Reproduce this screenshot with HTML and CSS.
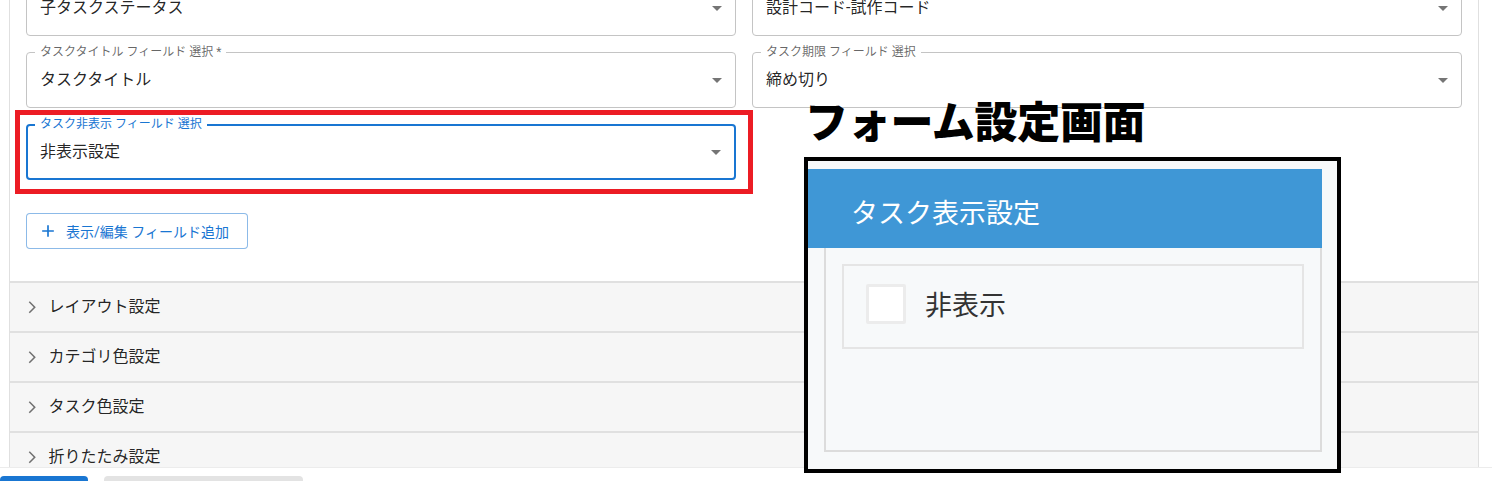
FILE: index.html
```html
<!DOCTYPE html>
<html lang="ja">
<head>
<meta charset="utf-8">
<title>設定</title>
<link rel="stylesheet" href="styles.css">
</head>
<body>
<div class="app">
  <main class="main">
    <div class="page">
      <section class="panel">
        <div class="panel-body">
          <div class="fields">
            <div class="field">
              <span class="value">子タスクステータス</span>
              <svg class="arrow" viewBox="0 0 24 24"><path d="M7 10l5 5 5-5z"/></svg>
            </div>
            <div class="field">
              <span class="value">設計コード-試作コード</span>
              <svg class="arrow" viewBox="0 0 24 24"><path d="M7 10l5 5 5-5z"/></svg>
            </div>
            <div class="field">
              <span class="label">タスクタイトル フィールド 選択 *</span>
              <span class="value">タスクタイトル</span>
              <svg class="arrow" viewBox="0 0 24 24"><path d="M7 10l5 5 5-5z"/></svg>
            </div>
            <div class="field">
              <span class="label">タスク期限 フィールド 選択</span>
              <span class="value">締め切り</span>
              <svg class="arrow" viewBox="0 0 24 24"><path d="M7 10l5 5 5-5z"/></svg>
            </div>
            <div class="annot-wrap">
              <div class="field field-focused">
                <span class="label">タスク非表示 フィールド 選択</span>
                <span class="value">非表示設定</span>
                <svg class="arrow" viewBox="0 0 24 24"><path d="M7 10l5 5 5-5z"/></svg>
              </div>
              <div class="red-box"></div>
            </div>
          </div>
          <button class="add-btn" type="button">
            <svg class="plus" viewBox="0 0 24 24"><path d="M19 13h-6v6h-2v-6H5v-2h6V5h2v6h6v2z"/></svg>
            <span>表示/編集 フィールド追加</span>
          </button>
        </div>
        <div class="acc-row">
          <svg class="chev" viewBox="0 0 24 24"><path d="M6.23 20.23 8 22l10-10L8 2 6.23 3.77 14.46 12z"/></svg>
          <span class="acc-title">レイアウト設定</span>
        </div>
        <div class="acc-row">
          <svg class="chev" viewBox="0 0 24 24"><path d="M6.23 20.23 8 22l10-10L8 2 6.23 3.77 14.46 12z"/></svg>
          <span class="acc-title">カテゴリ色設定</span>
        </div>
        <div class="acc-row">
          <svg class="chev" viewBox="0 0 24 24"><path d="M6.23 20.23 8 22l10-10L8 2 6.23 3.77 14.46 12z"/></svg>
          <span class="acc-title">タスク色設定</span>
        </div>
        <div class="acc-row">
          <svg class="chev" viewBox="0 0 24 24"><path d="M6.23 20.23 8 22l10-10L8 2 6.23 3.77 14.46 12z"/></svg>
          <span class="acc-title">折りたたみ設定</span>
        </div>
      </section>
    </div>
  </main>
  <footer class="footer">
    <button class="btn-primary" type="button" aria-label="primary"></button>
    <button class="btn-secondary" type="button" aria-label="secondary"></button>
  </footer>

  <div class="annotation">
    <h2 class="annot-title">フォーム設定画面</h2>
    <div class="shot">
      <div class="shot-header">タスク表示設定</div>
      <div class="shot-panel">
        <div class="shot-group">
          <span class="shot-check"></span>
          <span class="shot-label">非表示</span>
        </div>
      </div>
    </div>
  </div>
</div>
</body>
</html>
```

FILE: styles.css
```css
* { box-sizing: border-box; }

html, body {
  margin: 0;
  padding: 0;
  background: #ffffff;
}

body {
  font-family: "Roboto", "Noto Sans CJK JP", sans-serif;
  color: rgba(0, 0, 0, 0.87);
}

.app {
  position: relative;
  height: 100vh;
  display: flex;
  flex-direction: column;
  overflow: hidden;
}

.main {
  flex: 1;
  overflow: hidden;
}

.page {
  margin-top: -20px;
}

.panel {
  margin-left: 9px;
  width: 1470px;
  border-left: 1px solid #e0e0e0;
  border-right: 1px solid #e0e0e0;
}

.panel-body {
  padding: 0 16px 32px;
  background: #ffffff;
}

.fields {
  display: grid;
  grid-template-columns: 710px 710px;
  grid-auto-rows: 56px;
  gap: 16px;
}

.field {
  position: relative;
  height: 56px;
  border: 1px solid #c4c4c4;
  border-radius: 4px;
  display: flex;
  align-items: center;
  padding: 0 13px;
  background: #ffffff;
}

.field-focused {
  border: 2px solid #1976d2;
  padding: 0 12px;
}

.label {
  position: absolute;
  top: -8px;
  left: 8px;
  padding: 0 5px;
  background: #ffffff;
  font-size: 12px;
  line-height: 14px;
  color: rgba(0, 0, 0, 0.6);
  white-space: nowrap;
}

.field-focused .label {
  top: -9px;
  left: 7px;
  color: #1976d2;
}

.value {
  font-size: 16px;
  line-height: 24px;
  color: rgba(0, 0, 0, 0.87);
}

.arrow {
  width: 24px;
  height: 24px;
  margin-left: auto;
  margin-right: -7px;
  fill: rgba(0, 0, 0, 0.54);
}

.field-focused .arrow {
  margin-right: -6px;
}

.annot-wrap {
  position: relative;
}

.red-box {
  position: absolute;
  left: -11px;
  top: -14px;
  right: -17px;
  bottom: -14px;
  border: 5px solid #ec1c24;
  pointer-events: none;
}

.add-btn {
  margin-top: 33px;
  height: 36px;
  width: 222px;
  display: flex;
  align-items: center;
  padding: 0 14px 0 11px;
  border: 1px solid rgba(25, 118, 210, 0.5);
  border-radius: 4px;
  background: #ffffff;
  color: #1976d2;
  font-family: "Roboto", "Noto Sans CJK JP", sans-serif;
  font-size: 14px;
  font-weight: 400;
  cursor: pointer;
  gap: 8px;
  white-space: nowrap;
}

.plus {
  width: 20px;
  height: 20px;
  fill: #1976d2;
  flex: none;
}

.acc-row {
  height: 50px;
  border-top: 2px solid #e0e0e0;
  background: #f6f6f6;
  display: flex;
  align-items: center;
  padding-left: 15px;
}

.chev {
  width: 14.4px;
  height: 14.4px;
  fill: rgba(0, 0, 0, 0.54);
  flex: none;
}

.acc-title {
  margin-left: 9px;
  font-size: 16px;
  line-height: 24px;
  color: rgba(0, 0, 0, 0.87);
}

.footer {
  height: 14px;
  flex: none;
  border-top: 1px solid #ececec;
  background: #ffffff;
  padding-top: 8px;
  display: flex;
  align-items: flex-start;
  gap: 16px;
  overflow: hidden;
}

.btn-primary,
.btn-secondary {
  height: 36px;
  border: none;
  border-radius: 4px;
  flex: none;
}

.btn-primary {
  width: 88px;
  background: #1976d2;
}

.btn-secondary {
  width: 199px;
  background: #e3e3e3;
}

/* annotation overlay (pasted screenshot + caption) */
.annotation {
  position: absolute;
  left: 804px;
  top: 98px;
  width: 537px;
}

.annot-title {
  margin: 0 0 17px 1px;
  font-family: "Noto Sans CJK JP", sans-serif;
  font-size: 43px;
  line-height: 42px;
  font-weight: 900;
  color: #000000;
  letter-spacing: -0.3px;
  white-space: nowrap;
}

.shot {
  width: 537px;
  height: 316px;
  border: 4px solid #000000;
  background: #f7f9fa;
  padding-top: 8px;
}

.shot-header {
  width: 514px;
  height: 79px;
  background: #3f97d6;
  color: #ffffff;
  font-family: "Noto Sans CJK JP", sans-serif;
  font-size: 27px;
  line-height: 27px;
  display: flex;
  align-items: center;
  padding: 6px 0 0 43px;
}

.shot-panel {
  width: 498px;
  margin-left: 16px;
  height: 204px;
  border-left: 2px solid #dcdcdc;
  border-right: 2px solid #dcdcdc;
  border-bottom: 2px solid #dcdcdc;
  padding: 16px 16px 0;
}

.shot-group {
  height: 85px;
  border: 2px solid #e5e5e5;
  display: flex;
  align-items: flex-start;
  padding: 18px 0 0 22px;
}

.shot-check {
  width: 40px;
  height: 40px;
  background: #ffffff;
  border: 3px solid #ececec;
  border-radius: 2px;
  flex: none;
}

.shot-label {
  margin-left: 19px;
  font-family: "Noto Sans CJK JP", sans-serif;
  font-size: 27px;
  line-height: 40px;
  color: #333333;
}
```
